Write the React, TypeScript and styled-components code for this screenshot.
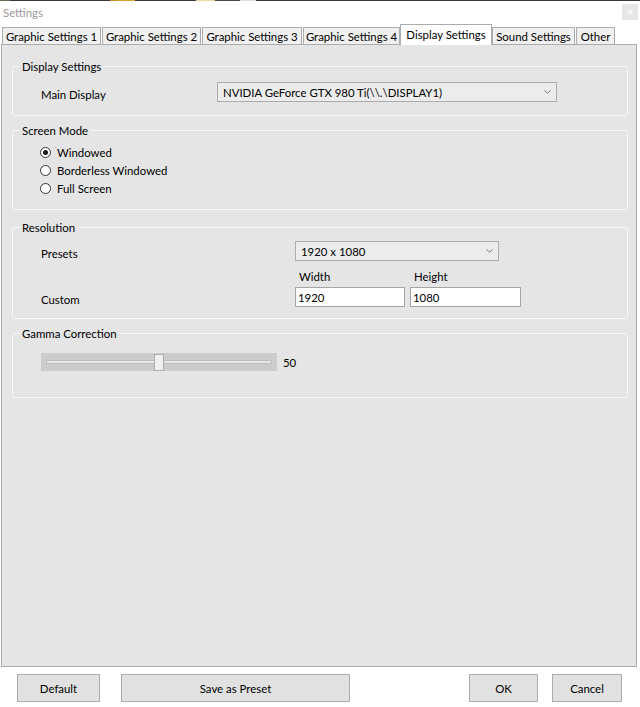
import styled, { createGlobalStyle } from "styled-components";

const GlobalStyle = createGlobalStyle`
    html, body {
        margin: 0;
        padding: 0;
        background: #ffffff;
    }
    body {
        font-family: Lato, "Liberation Sans", sans-serif;
        font-size: 11.4px;
        color: #000;
    }
`;

const tabs = [
    { label: "Graphic Settings 1", width: 99 },
    { label: "Graphic Settings 2", width: 99 },
    { label: "Graphic Settings 3", width: 100 },
    { label: "Graphic Settings 4", width: 97 },
    { label: "Display Settings", width: 92 },
    { label: "Sound Settings", width: 83 },
    { label: "Other", width: 39 },
];

const activeTab = "Display Settings";
const screenModes = ["Windowed", "Borderless Windowed", "Full Screen"];
const gamma = 50;

function Chevron() {
    return (
        <svg width="7" height="4" viewBox="0 0 7 4">
            <path d="M0.5 0.5 L3.5 3.2 L6.5 0.5" fill="none" stroke="#7a7a7a" strokeWidth="1" />
        </svg>
    );
}

function ComboBox({ value, width }: { value: string; width: number }) {
    return (
        <Combo $width={width}>
            <span>{value}</span>
            <Chevron />
        </Combo>
    );
}

function Radio({ label, checked }: { label: string; checked?: boolean }) {
    return (
        <RadioRow>
            <RadioCircle $checked={checked} />
            {label}
        </RadioRow>
    );
}

function App() {
    return (
        <Window>
            <GlobalStyle />
            <DesktopEdge />
            <TitleBar>
                <span>Settings</span>
                <CloseButton>×</CloseButton>
            </TitleBar>

            <TabStrip>
                {tabs.map((t) => (
                    <Tab key={t.label} $width={t.width} $active={t.label === activeTab}>
                        {t.label}
                    </Tab>
                ))}
            </TabStrip>

            <Panel>
                <Group $pt={8} $pb={13} $mb={7}>
                    <legend>Display Settings</legend>
                    <FieldRow $labelWidth={176}>
                        <FieldLabel>Main Display</FieldLabel>
                        <ComboBox value="NVIDIA GeForce GTX 980 Ti(\\.\DISPLAY1)" width={340} />
                    </FieldRow>
                </Group>

                <Group $pt={5} $pb={12} $mb={10}>
                    <legend>Screen Mode</legend>
                    {screenModes.map((m) => (
                        <Radio key={m} label={m} checked={m === "Windowed"} />
                    ))}
                </Group>

                <Group $pt={6} $pb={11} $mb={7}>
                    <legend>Resolution</legend>
                    <ResolutionGrid>
                        <FieldLabel>Presets</FieldLabel>
                        <ComboBox value="1920 x 1080" width={204} />
                        <span />
                        <SizeHeaders>
                            <span>Width</span>
                            <span>Height</span>
                        </SizeHeaders>
                        <FieldLabel>Custom</FieldLabel>
                        <SizeInputs>
                            <TextBox defaultValue="1920" $width={110} readOnly />
                            <TextBox defaultValue="1080" $width={111} readOnly />
                        </SizeInputs>
                    </ResolutionGrid>
                </Group>

                <Group $pt={12} $pb={26} $mb={0}>
                    <legend>Gamma Correction</legend>
                    <SliderRow>
                        <Slider>
                            <SliderTrack />
                            <SliderThumb style={{ left: `calc(${gamma}% - 5px)` }} />
                        </Slider>
                        <span>{gamma}</span>
                    </SliderRow>
                </Group>
            </Panel>

            <ButtonBar>
                <Button $width={83}>Default</Button>
                <Button $width={229}>Save as Preset</Button>
                <Spacer />
                <Button $width={69}>OK</Button>
                <Button $width={70}>Cancel</Button>
            </ButtonBar>
        </Window>
    );
}

const Window = styled.div`
    width: 640px;
    height: 707px;
    background: #ffffff;
    display: flex;
    flex-direction: column;
    overflow: hidden;
`;

const DesktopEdge = styled.div`
    height: 1px;
    flex-shrink: 0;
    background: linear-gradient(
        90deg,
        #6b6b5a 0 10px,
        #3a3a3a 10px 110px,
        #c98a2a 110px 118px,
        #e0a030 118px 135px,
        #3a3a3a 135px 196px,
        #f2d9a0 196px 215px,
        #4a4350 215px 240px,
        #ddd 240px 256px,
        #3a3a3a 256px
    );
`;

const TitleBar = styled.div`
    height: 23px;
    flex-shrink: 0;
    display: flex;
    justify-content: space-between;
    align-items: flex-start;
    padding: 0 2px 0 3px;
    color: #9a9a9a;

    span {
        line-height: 23px;
    }
`;

const CloseButton = styled.div`
    width: 16px;
    height: 16px;
    margin-top: 3px;
    background: #e6e6e6;
    color: #ffffff;
    display: grid;
    place-items: center;
    font-size: 12px;
    line-height: 1;
`;

const TabStrip = styled.div`
    height: 20px;
    flex-shrink: 0;
    display: flex;
    align-items: flex-end;
    gap: 1px;
    padding-left: 2px;
    position: relative;
    z-index: 1;
`;

const Tab = styled.div<{ $width: number; $active?: boolean }>`
    width: ${({ $width }) => $width}px;
    box-sizing: border-box;
    height: ${({ $active }) => ($active ? 21 : 17)}px;
    margin: ${({ $active }) => ($active ? "0 -1px -1px" : "0")};
    border: 1px solid #acacac;
    border-bottom: none;
    background: ${({ $active }) => ($active ? "#ffffff" : "#f0f0f0")};
    display: flex;
    align-items: center;
    justify-content: center;
    white-space: nowrap;
    padding-bottom: ${({ $active }) => ($active ? 2 : 0)}px;
`;

const Panel = styled.div`
    flex: 1;
    margin: 0 3px 0 1px;
    border: 1px solid #acacac;
    background: #e5e5e5;
    padding: 14px 8px 0 10px;
`;

const Group = styled.fieldset<{ $pt: number; $pb: number; $mb: number }>`
    margin: 0 0 ${({ $mb }) => $mb}px;
    padding: ${({ $pt }) => $pt}px 8px ${({ $pb }) => $pb}px 28px;
    border: 1px solid #f6f8fa;
    border-radius: 3px;
    box-shadow: 0 0 0 1px #dde3e8 inset;
    min-width: 0;

    legend {
        margin-left: -21px;
        padding: 0 2px;
        line-height: 15px;
    }
`;

const FieldRow = styled.div<{ $labelWidth: number }>`
    display: grid;
    grid-template-columns: ${({ $labelWidth }) => $labelWidth}px auto;
    align-items: center;
`;

const FieldLabel = styled.span`
    padding-top: 4px;
`;

const Combo = styled.div<{ $width: number }>`
    width: ${({ $width }) => $width}px;
    height: 20px;
    box-sizing: border-box;
    border: 1px solid #acacac;
    background: #ececec;
    display: flex;
    align-items: center;
    justify-content: space-between;
    padding: 0 5px 0 5px;
    white-space: nowrap;
`;

const RadioRow = styled.label`
    height: 18px;
    display: flex;
    align-items: center;
    gap: 6px;
`;

const RadioCircle = styled.span<{ $checked?: boolean }>`
    width: 11px;
    height: 11px;
    box-sizing: border-box;
    margin-left: -1px;
    border: 1px solid #333333;
    border-radius: 50%;
    background: #ffffff;
    display: grid;
    place-items: center;

    &::after {
        content: "";
        width: 5px;
        height: 5px;
        border-radius: 50%;
        background: ${({ $checked }) => ($checked ? "#1a1a1a" : "transparent")};
    }
`;

const ResolutionGrid = styled.div`
    display: grid;
    grid-template-columns: 254px auto;
    grid-template-rows: 20px 14px 20px;
    row-gap: 6px;
    align-items: center;
`;

const SizeHeaders = styled.div`
    display: flex;
    padding-left: 4px;
    margin-top: 4px;

    span {
        width: 115px;
    }
`;

const SizeInputs = styled.div`
    display: flex;
    gap: 5px;
`;

const TextBox = styled.input<{ $width: number }>`
    width: ${({ $width }) => $width}px;
    height: 20px;
    box-sizing: border-box;
    border: 1px solid #a5a5a5;
    background: #ffffff;
    font: inherit;
    padding: 0 2px;
    outline: none;
`;

const SliderRow = styled.div`
    display: flex;
    align-items: center;
    gap: 6px;
`;

const Slider = styled.div`
    width: 236px;
    height: 18px;
    background: #cccccc;
    position: relative;
    display: flex;
    align-items: center;
    padding: 0 5px;
    box-sizing: border-box;
`;

const SliderTrack = styled.div`
    flex: 1;
    height: 2px;
    border: 1px solid #bdbdbd;
    background: #e7e7e7;
`;

const SliderThumb = styled.div`
    position: absolute;
    top: 1px;
    width: 10px;
    height: 17px;
    box-sizing: border-box;
    border: 1px solid #acacac;
    background: #f0f0f0;
`;

const ButtonBar = styled.div`
    height: 40px;
    box-sizing: border-box;
    flex-shrink: 0;
    display: flex;
    align-items: flex-start;
    padding: 7px 18px 0 17px;
    gap: 21px;

    & > :nth-last-child(1) {
        margin-left: -7px;
    }
`;

const Spacer = styled.div`
    flex: 1;
`;

const Button = styled.div<{ $width: number }>`
    width: ${({ $width }) => $width}px;
    height: 28px;
    box-sizing: border-box;
    border: 1px solid #adadad;
    background: #e1e1e1;
    display: flex;
    align-items: center;
    justify-content: center;
`;

export default App;
